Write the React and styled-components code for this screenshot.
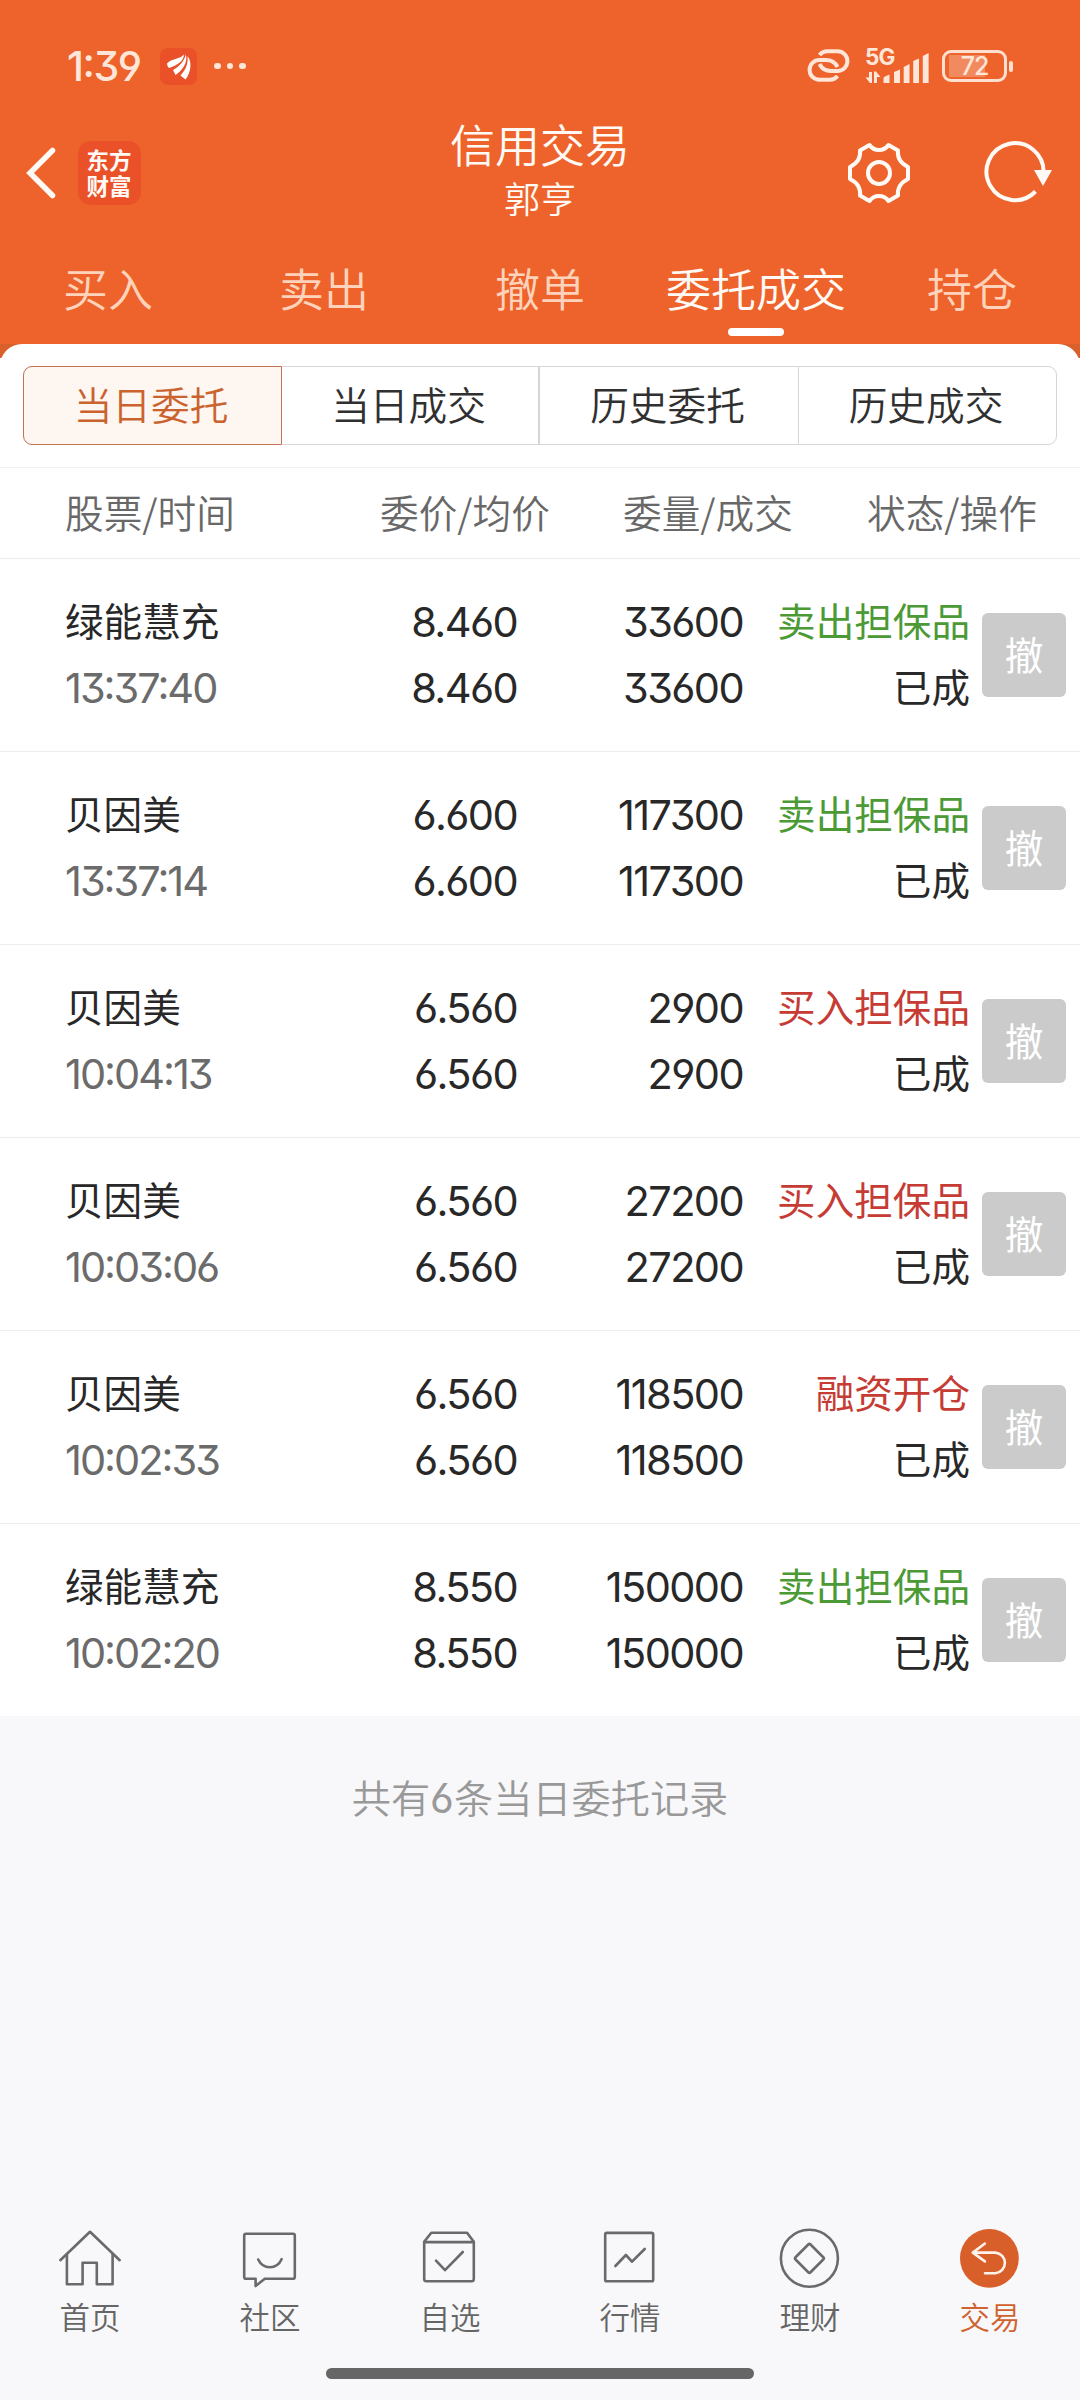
import React from "react";
import styled, { createGlobalStyle } from "styled-components";

const tabs = ["买入", "卖出", "撤单", "委托成交", "持仓"];
const segments = ["当日委托", "当日成交", "历史委托", "历史成交"];

const orders = [
  { name: "绿能慧充", time: "13:37:40", price: "8.460", amount: "33600", type: "卖出担保品", side: "sell" },
  { name: "贝因美", time: "13:37:14", price: "6.600", amount: "117300", type: "卖出担保品", side: "sell" },
  { name: "贝因美", time: "10:04:13", price: "6.560", amount: "2900", type: "买入担保品", side: "buy" },
  { name: "贝因美", time: "10:03:06", price: "6.560", amount: "27200", type: "买入担保品", side: "buy" },
  { name: "贝因美", time: "10:02:33", price: "6.560", amount: "118500", type: "融资开仓", side: "buy" },
  { name: "绿能慧充", time: "10:02:20", price: "8.550", amount: "150000", type: "卖出担保品", side: "sell" },
];

const navItems = [
  {
    label: "首页",
    icon: (
      <>
        <path d="M2.3 34.2 L32 5.8 L61.7 34.2" />
        <path d="M8.9 28.5 V58.3 H24.6 V36.8 H38.8 V58.3 H54.6 V28.5" />
      </>
    ),
  },
  {
    label: "社区",
    icon: (
      <>
        <path d="M8 7.7 H55 Q56.8 7.7 56.8 9.5 V51 Q56.8 52.8 55 52.8 H26.8 L17.6 60 V52.8 H8 Q6.2 52.8 6.2 51 V9.5 Q6.2 7.7 8 7.7 Z" />
        <path d="M20.2 33.5 C25 43.8 38.8 43.8 43.6 33.2" />
      </>
    ),
  },
  {
    label: "自选",
    icon: (
      <>
        <path d="M6.2 15.8 L13.3 6.8 H49 L55.8 15.8 V53 Q55.8 55.2 53.6 55.2 H8.4 Q6.2 55.2 6.2 53 Z" />
        <path d="M6.2 16.1 H55.8" />
        <path d="M18 34.7 L27 44.2 L44.8 26" />
      </>
    ),
  },
  {
    label: "行情",
    icon: (
      <>
        <rect x="7.2" y="6.9" width="48" height="48.4" rx="1.6" />
        <path d="M17.4 40 L27.9 29 L34 35.7 L46.7 23" />
      </>
    ),
  },
  {
    label: "理财",
    icon: (
      <>
        <circle cx="31.4" cy="32.3" r="28.5" />
        <rect x="20.8" y="21.8" width="21.2" height="21.2" rx="1.6" transform="rotate(45 31.4 32.4)" />
      </>
    ),
  },
  {
    label: "交易",
    active: true,
    icon: (
      <>
        <circle cx="31.4" cy="32.3" r="29.4" fill="#d85f29" stroke="none" />
        <path d="M26.9 17.5 L14.8 26.6 L26.9 35.4 M14.8 26.6 H37.5 A10.4 10.4 0 0 1 37.5 47.3 H27" stroke="#fff2ea" />
      </>
    ),
  },
];

export default function App() {
  return (
    <>
      <GlobalStyle />
      <Page>
        <Header>
          <StatusBar>
            <Clock>1:39</Clock>
            <AppBadge>
              <svg width="37" height="37" viewBox="0 0 37 37" fill="#fff">
                <path d="M7 15.500 C12 10 19 12 24 6.500 C24 13 17 17.500 9 20 Q7 18.500 7 15.500 Z" />
                <path d="M25.800 6.500 C28 14 23 22 15.500 27 L13 22 C19 18.500 24 14 25.800 6.500 Z" />
                <path d="M27.500 8 C33 15 30 26 25.500 31.500 L20.500 27.500 C25 22.500 28.500 17 27.500 8 Z" />
              </svg>
            </AppBadge>
            <Dots>
              <i />
              <i />
              <i />
            </Dots>
            <StatusRight>
              <svg width="48" height="40" viewBox="0 0 48 40" fill="none" stroke="#ffe6d8" strokeWidth="4">
                <path d="M15.500 9 C17.500 6.500 20 5.200 23 5.200 H33.500 A9.900 9.900 0 0 1 33.500 25 H27 C21 25 17.500 22 15.500 18" />
                <path
                  d="M15.500 9 C17.500 6.500 20 5.200 23 5.200 H33.500 A9.900 9.900 0 0 1 33.500 25 H27 C21 25 17.500 22 15.500 18"
                  transform="rotate(180 24.500 19.500)"
                />
              </svg>
              <Signal>
                <span>5G</span>
                <svg width="64" height="36" viewBox="0 0 64 36" fill="#ffe6d8">
                  <path d="M4 24 H7 V35 H5 L0.500 29.500 H4 Z M9 35 V23.500 H11 L15.500 29 H12 V35 Z" />
                  <path d="M18.500 30 Q18.500 29 20 28.500 L24.500 26.500 V35 H18.500 Z" />
                  <path d="M29 24 L35 21.500 V35 H29 Z" />
                  <path d="M38.700 19 L44.500 16 V35 H38.700 Z" />
                  <path d="M48.200 13 L54 10.500 V35 H48.200 Z" />
                  <path d="M57.800 8 L63.600 5 V35 H57.800 Z" />
                </svg>
              </Signal>
              <Battery>
                <BatteryBody>
                  <span>72</span>
                </BatteryBody>
                <BatteryTip />
              </Battery>
            </StatusRight>
          </StatusBar>
          <TitleBar>
            <HeaderSide>
              <svg width="32" height="52" viewBox="0 0 32 52" fill="none" stroke="#fffaf5" strokeWidth="5.500" strokeLinecap="round">
                <path d="M27.500 3.500 L5 26 L27.500 48.500" />
              </svg>
              <Logo>
                <span>东方财富</span>
              </Logo>
            </HeaderSide>
            <Titles>
              <Title>信用交易</Title>
              <SubTitle>郭亨</SubTitle>
            </Titles>
            <HeaderSide $end>
              <svg width="64" height="64" viewBox="0 0 64 64" fill="none" stroke="#fffaf5" strokeWidth="4" strokeLinejoin="round">
                <path d="M22.500 4 Q26 9 32 9 Q38 9 41.500 4 L51 9.500 C50 18 54 22.500 61 26 V38 C54 41.500 50 46 51 54.500 L41.500 60 Q38 55 32 55 Q26 55 22.500 60 L13 54.500 C14 46 10 41.500 3 38 V26 C10 22.500 14 18 13 9.500 Z" />
                <circle cx="32" cy="32" r="11" />
              </svg>
              <svg width="72" height="64" viewBox="0 0 72 64" fill="none" stroke="#fffaf5" strokeWidth="4">
                <path d="M60.500 32 A28.500 28.500 0 1 0 52.500 50.500" />
                <path d="M51 29 H69 L60 45 Z" fill="#fffaf5" stroke="none" />
              </svg>
            </HeaderSide>
          </TitleBar>
          <Tabs>
            {tabs.map((tab) => (
              <Tab key={tab} $active={tab === "委托成交"}>
                {tab}
              </Tab>
            ))}
          </Tabs>
        </Header>
        <Panel>
          <PanelCap>
            <div />
          </PanelCap>
          <Segments>
            {segments.map((item, i) => (
              <Segment key={item} $active={i === 0}>
                {item}
              </Segment>
            ))}
          </Segments>
          <TableHead>
            <span>股票/时间</span>
            <span>委价/均价</span>
            <span>委量/成交</span>
            <span>状态/操作</span>
          </TableHead>
          {orders.map((order) => (
            <OrderRow key={order.time}>
              <Cell>
                <Name>{order.name}</Name>
                <Num $muted>{order.time}</Num>
              </Cell>
              <Cell $end>
                <Num>{order.price}</Num>
                <Num>{order.price}</Num>
              </Cell>
              <Cell $end>
                <Num>{order.amount}</Num>
                <Num>{order.amount}</Num>
              </Cell>
              <Cell $end>
                <Name $side={order.side}>{order.type}</Name>
                <Name>已成</Name>
              </Cell>
              <CancelButton>撤</CancelButton>
            </OrderRow>
          ))}
        </Panel>
        <Summary>
          共有<b>6</b>条当日委托记录
        </Summary>
        <BottomNav>
          {navItems.map((item) => (
            <NavItem key={item.label} $active={item.active}>
              <svg
                width="64"
                height="64"
                viewBox="0 0 64 64"
                fill="none"
                stroke="#6a6a6a"
                strokeWidth="2.600"
                strokeLinecap="round"
                strokeLinejoin="round"
              >
                {item.icon}
              </svg>
              <span>{item.label}</span>
            </NavItem>
          ))}
        </BottomNav>
        <HomeBar />
      </Page>
    </>
  );
}

const GlobalStyle = createGlobalStyle`
  * {
    box-sizing: border-box;
  }
  body {
    margin: 0;
    background-color: #f8f8fa;
    font-family: "Noto Sans CJK SC", sans-serif;
  }
  svg {
    display: block;
    flex-shrink: 0;
  }
`;

const digits = `
  font-family: Inter, "Noto Sans CJK SC", sans-serif;
  font-feature-settings: "cv03", "cv04", "cv09", "calt";
`;

const Page = styled.div`
  width: 1080px;
  height: 2400px;
  display: flex;
  flex-direction: column;
  background-color: #f8f8fa;
  overflow: hidden;
`;

const Header = styled.header`
  height: 344px;
  background-color: #ed632b;
  color: #fffaf5;
`;

const StatusBar = styled.div`
  height: 122px;
  padding: 10px 67px 0 67px;
  display: flex;
  align-items: center;
`;

const Clock = styled.span`
  ${digits}
  width: 93px;
  font-size: 41px;
  font-weight: 500;
  letter-spacing: -1.5px;
  line-height: 50px;
  white-space: nowrap;
  color: #ffe6d8;
`;

const AppBadge = styled.div`
  width: 37px;
  height: 37px;
  border-radius: 8px;
  background-color: #ea5128;
`;

const Dots = styled.div`
  display: flex;
  gap: 6px;
  margin-left: 17px;
  i {
    width: 6.5px;
    height: 6.5px;
    border-radius: 50%;
    background-color: #ffe6d8;
  }
`;

const StatusRight = styled.div`
  display: flex;
  align-items: center;
  margin-left: auto;
`;

const Signal = styled.div`
  position: relative;
  margin-left: 13px;
  span {
    ${digits}
    position: absolute;
    left: 0;
    top: -4px;
    font-size: 22.5px;
    font-weight: 700;
    letter-spacing: -1px;
    line-height: 26px;
    color: #ffe6d8;
  }
`;

const Battery = styled.div`
  display: flex;
  align-items: center;
  gap: 2px;
  margin-left: 13px;
`;

const BatteryBody = styled.div`
  width: 65px;
  height: 32px;
  border: 3px solid #ffe0d0;
  border-radius: 9px;
  display: flex;
  justify-content: center;
  align-items: center;
  background: linear-gradient(#f28a60, #f28a60) 4px 2px / 36px 22px no-repeat;
  span {
    ${digits}
    font-size: 25px;
    font-weight: 500;
    letter-spacing: -1px;
    line-height: 24px;
    color: #ffe6d8;
  }
`;

const BatteryTip = styled.div`
  width: 4px;
  height: 11px;
  border-radius: 2px;
  background-color: #ffe0d0;
`;

const TitleBar = styled.div`
  height: 102px;
  padding: 0 25px 0 25px;
  display: flex;
  justify-content: space-between;
  align-items: center;
`;

const HeaderSide = styled.div`
  width: 208px;
  display: flex;
  align-items: center;
  justify-content: ${({ $end }) => ($end ? "space-between" : "flex-start")};
  gap: 21px;
`;

const Logo = styled.div`
  width: 63px;
  height: 64px;
  border-radius: 13px;
  background-color: #ea5128;
  display: flex;
  align-items: center;
  justify-content: center;
  font-size: 22.5px;
  font-weight: 700;
  line-height: 26px;
  span {
    width: 46px;
    margin-bottom: 2px;
    word-break: break-all;
  }
`;

const Titles = styled.div`
  display: flex;
  flex-direction: column;
  align-items: center;
  padding-bottom: 6px;
`;

const Title = styled.div`
  font-size: 45px;
  font-weight: 350;
  line-height: 55px;
`;

const SubTitle = styled.div`
  font-size: 36px;
  font-weight: 350;
  line-height: 53px;
`;

const Tabs = styled.nav`
  height: 120px;
  display: flex;
`;

const Tab = styled.div`
  width: 216px;
  display: flex;
  flex-direction: column;
  align-items: center;
  padding-top: 32px;
  font-size: 45px;
  font-weight: 350;
  line-height: 64px;
  color: ${({ $active }) => ($active ? "#fffaf5" : "#ffd3bb")};
  &::after {
    content: "";
    width: 56px;
    height: 8px;
    margin-top: 8px;
    border-radius: 4px;
    background-color: ${({ $active }) => ($active ? "#ffffff" : "transparent")};
  }
`;

const Panel = styled.main`
  height: 1372px;
  background-color: #ffffff;
`;

const PanelCap = styled.div`
  height: 14px;
  overflow: hidden;
  background-color: #d95f2b;
  div {
    height: 44px;
    border-radius: 22px;
    background-color: #ffffff;
  }
`;

const Segments = styled.div`
  display: grid;
  grid-template-columns: 259px 257px 259px 259px;
  height: 79px;
  margin: 8px 23px 22px;
`;

const Segment = styled.div`
  display: flex;
  justify-content: center;
  align-items: center;
  padding: 0 3px 5px 0;
  border: 1px solid ${({ $active }) => ($active ? "#c07350" : "#d6d6d6")};
  background-color: ${({ $active }) => ($active ? "#fdf6f1" : "#ffffff")};
  color: ${({ $active }) => ($active ? "#cb632f" : "#303030")};
  font-size: 38.7px;
  font-weight: 350;
  &:first-child {
    border-radius: 9px 0 0 9px;
  }
  &:nth-child(2) {
    border-left: none;
  }
  &:nth-child(3) {
    border-right: none;
  }
  &:last-child {
    border-radius: 0 9px 9px 0;
  }
`;

const TableHead = styled.div`
  height: 92px;
  padding: 0 0 4px 65px;
  display: grid;
  grid-template-columns: 315px 243px 244px 1fr;
  align-items: center;
  border-top: 1px solid #f3f3f3;
  border-bottom: 1px solid #ececec;
  font-size: 38.7px;
  font-weight: 350;
  color: #686868;
`;

const OrderRow = styled.div`
  height: 193px;
  padding-left: 65px;
  display: grid;
  grid-template-columns: 228px 224px 226px 227px 96px;
  align-items: center;
  border-bottom: 1px solid #ececec;
  &:last-child {
    border-bottom-color: transparent;
  }
`;

const Cell = styled.div`
  display: flex;
  flex-direction: column;
  align-items: ${({ $end }) => ($end ? "flex-end" : "flex-start")};
  white-space: nowrap;
`;

const sideColors = { sell: "#4b9a35", buy: "#c63c35" };

const Name = styled.span`
  margin-bottom: 5px;
  font-size: 38.6px;
  line-height: 61px;
  color: ${({ $side }) => sideColors[$side] || "#282828"};
`;

const Num = styled.span`
  ${digits}
  font-size: 41.5px;
  letter-spacing: ${({ $muted }) => ($muted ? "-2px" : "-1.6px")};
  line-height: 66px;
  color: ${({ $muted }) => ($muted ? "#6b6b6b" : "#282828")};
`;

const CancelButton = styled.button`
  width: 84px;
  height: 84px;
  margin-left: 12px;
  padding: 0 0 5px;
  border: none;
  border-radius: 6px;
  background-color: #cbcbcb;
  color: #ffffff;
  font-family: inherit;
  font-size: 38.6px;
`;

const Summary = styled.div`
  padding-top: 51px;
  text-align: center;
  font-size: 39.2px;
  font-weight: 350;
  line-height: 58px;
  color: #999999;
  b {
    ${digits}
    font-size: 41px;
    font-weight: 400;
  }
`;

const BottomNav = styled.nav`
  margin-top: auto;
  height: 142px;
  display: flex;
`;

const NavItem = styled.div`
  width: 180px;
  display: flex;
  flex-direction: column;
  align-items: center;
  font-size: 30.5px;
  font-weight: 350;
  line-height: 44px;
  color: ${({ $active }) => ($active ? "#d0622f" : "#666666")};
  span {
    margin-top: 4px;
  }
`;

const HomeBar = styled.div`
  width: 428px;
  height: 11px;
  margin: 0 auto 21px;
  border-radius: 6px;
  background-color: #666666;
`;
